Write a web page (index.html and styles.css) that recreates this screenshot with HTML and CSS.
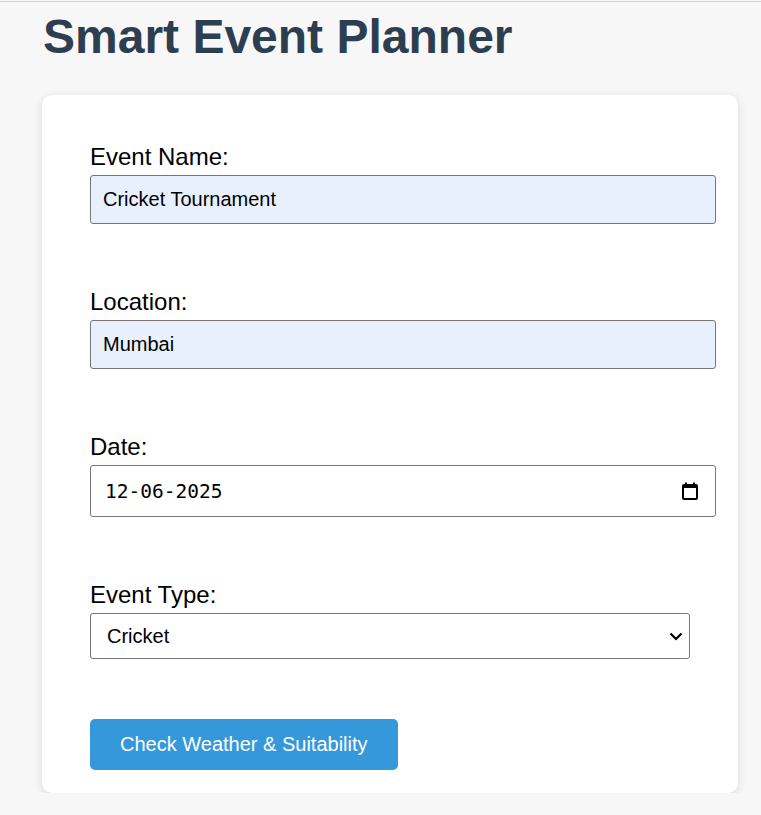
FILE: index.html
```html
<!DOCTYPE html>
<html lang="en">
<head>
<meta charset="utf-8">
<title>Smart Event Planner</title>
<link rel="stylesheet" href="styles.css">
</head>
<body>
<div class="topline"></div>
<div class="page">
  <h1 class="title">Smart Event Planner</h1>
  <form class="card">
    <div class="field">
      <label class="label" for="name">Event Name:</label>
      <input class="text-input autofill" id="name" type="text" value="Cricket Tournament">
    </div>
    <div class="field">
      <label class="label" for="loc">Location:</label>
      <input class="text-input autofill" id="loc" type="text" value="Mumbai">
    </div>
    <div class="field">
      <label class="label" for="date">Date:</label>
      <div class="date-box">
        <input class="date-text" id="date" type="text" value="12-06-2025">
        <svg class="cal-icon" width="16" height="18" viewBox="0 0 16 18" aria-hidden="true">
          <rect x="3" y="0.5" width="2" height="3" fill="#000"/>
          <rect x="11" y="0.5" width="2" height="3" fill="#000"/>
          <rect x="1" y="3" width="14" height="14" rx="1" fill="none" stroke="#000" stroke-width="2"/>
          <rect x="1" y="3" width="14" height="3" fill="#000"/>
        </svg>
      </div>
    </div>
    <div class="field field-last">
      <label class="label" for="type">Event Type:</label>
      <select class="select" id="type">
        <option>Cricket</option>
        <option>Football</option>
        <option>Wedding</option>
      </select>
    </div>
    <button class="btn" type="button">Check Weather &amp; Suitability</button>
  </form>
</div>
</body>
</html>
```

FILE: styles.css
```css
html, body {
  margin: 0;
  padding: 0;
  background: #f7f7f7;
}
body {
  font-family: "Liberation Sans", Arial, sans-serif;
  color: #000;
}
.topline {
  height: 1px;
  margin-top: 1px;
  background: #d3d3d3;
}
.page {
  padding: 0 23px 0 42px;
}
.title {
  margin: 7px 0 0 1px;
  font-size: 48px;
  line-height: 55px;
  font-weight: bold;
  color: #2c3e50;
}
.card {
  margin-top: 31px;
  width: 600px;
  padding: 48px 48px 23px;
  background: #fff;
  border-radius: 10px;
  box-shadow: 0 2px 10px rgba(0, 0, 0, 0.12);
}
.field {
  margin-bottom: 64px;
}
.field-last {
  margin-bottom: 60px;
}
.label {
  display: block;
  font-size: 24px;
  line-height: 28px;
  margin-bottom: 4px;
}
.text-input {
  display: block;
  width: 600px;
  padding: 12px;
  font-family: "Liberation Sans", Arial, sans-serif;
  font-size: 20px;
  line-height: 23px;
  border: 1px solid #767676;
  border-radius: 3px;
  background: #fff;
  color: #000;
  margin: 0;
  outline: none;
}
.autofill {
  background: #e8f0fe;
}
.date-box {
  display: flex;
  align-items: center;
  box-sizing: border-box;
  width: 626px;
  height: 52px;
  padding: 0 17px 0 14px;
  border: 1px solid #767676;
  border-radius: 3px;
  background: #fff;
}
.date-text {
  flex: 1;
  min-width: 0;
  padding: 0;
  margin: 0;
  border: none;
  outline: none;
  background: transparent;
  font-family: "DejaVu Sans Mono", "Liberation Mono", monospace;
  font-size: 19.5px;
  color: #000;
}
.cal-icon {
  flex: none;
  display: block;
}
.select {
  display: block;
  box-sizing: border-box;
  width: 600px;
  height: 46px;
  padding: 0 40px 0 16px;
  font-family: "Liberation Sans", Arial, sans-serif;
  font-size: 20px;
  color: #000;
  border: 1px solid #767676;
  border-radius: 3px;
  -webkit-appearance: none;
  appearance: none;
  background-color: #fff;
  background-image: url("data:image/svg+xml,%3Csvg xmlns='http://www.w3.org/2000/svg' width='14' height='9' viewBox='0 0 14 9'%3E%3Cpath d='M1.5 1.5 L7 7 L12.5 1.5' fill='none' stroke='%23000' stroke-width='2.2'/%3E%3C/svg%3E");
  background-repeat: no-repeat;
  background-position: right 6px center;
  margin: 0;
}
.btn {
  display: block;
  padding: 14px 30px;
  font-family: "Liberation Sans", Arial, sans-serif;
  font-size: 20px;
  line-height: 23px;
  color: #fff;
  background: #3498db;
  border: none;
  border-radius: 5px;
  cursor: pointer;
}
```
